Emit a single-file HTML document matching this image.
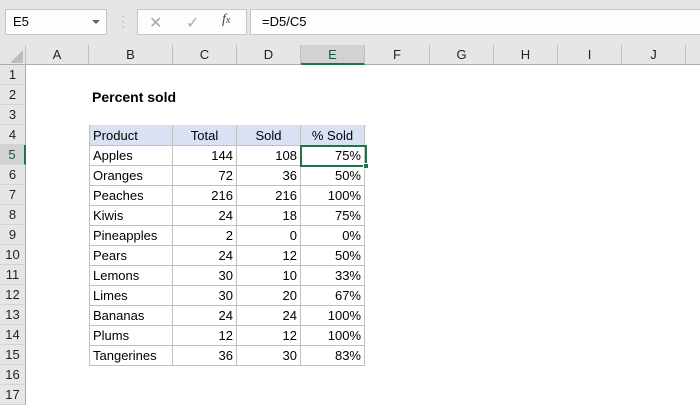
<!DOCTYPE html>
<html><head><style>
*{margin:0;padding:0;box-sizing:border-box}
body{width:700px;height:400px;overflow:hidden;background:#fff;font-family:"Liberation Sans",sans-serif;position:relative;font-size:13px;color:#000}
.a{position:absolute}
.top{left:0;top:0;width:700px;height:45px;background:#e6e6e6}
.box{background:#fdfdfd;border:1px solid #c6c6c6}
.ch{top:45px;height:20px;background:#e6e6e6;border-bottom:1px solid #ababab;border-right:1px solid #c0c0c0;text-align:center;line-height:19px;font-size:13px;color:#222}
.rh{left:0;width:26px;height:20px;background:#e6e6e6;border-right:1px solid #ababab;border-bottom:1px solid #d4d4d4;text-align:center;line-height:20px;font-size:13px;color:#222}
.c{position:absolute;height:20px;border-right:1px solid #c0c0c0;border-bottom:1px solid #c0c0c0;line-height:20px;padding:0 3px;white-space:nowrap}
.r{text-align:right}
</style></head><body>
<div class="a top"></div>
<div class="a box" style="left:5px;top:9px;width:102px;height:26px;line-height:24px;padding-left:7px;font-size:13px">E5</div>
<div class="a" style="left:92px;top:20px;width:0;height:0;border-left:4px solid transparent;border-right:4px solid transparent;border-top:4px solid #666"></div>
<div class="a" style="left:121px;top:14px;color:#aaa;font-size:12px;line-height:5px">·<br>·<br>·</div>
<div class="a box" style="left:137px;top:9px;width:110px;height:26px"></div>
<div class="a" style="left:149px;top:13px;color:#aaa;font-size:16px">✕</div>
<div class="a" style="left:186px;top:13px;color:#aaa;font-size:16px">✓</div>
<div class="a" style="left:222px;top:12px;color:#444;font-size:14px;font-style:italic;font-family:'Liberation Serif',serif">f<span style="font-size:10px">x</span></div>
<div class="a box" style="left:250px;top:9px;width:452px;height:26px;line-height:24px;padding-left:11px">=D5/C5</div>

<div class="a ch" style="left:0;width:26px;border-right:1px solid #c0c0c0"></div>
<div class="a" style="left:10px;top:50px;width:0;height:0;border-left:13px solid transparent;border-bottom:13px solid #bdbdbd"></div>
<div class="a ch" style="left:26px;width:63px">A</div>
<div class="a ch" style="left:89px;width:84px">B</div>
<div class="a ch" style="left:173px;width:64px">C</div>
<div class="a ch" style="left:237px;width:64px">D</div>
<div class="a ch" style="left:301px;width:64px;background:#d2d2d2;border-bottom:2px solid #217346;color:#185c37">E</div>
<div class="a ch" style="left:365px;width:65px">F</div>
<div class="a ch" style="left:430px;width:64px">G</div>
<div class="a ch" style="left:494px;width:64px">H</div>
<div class="a ch" style="left:558px;width:64px">I</div>
<div class="a ch" style="left:622px;width:64px">J</div>
<div class="a ch" style="left:686px;width:20px"></div>

<div class="a rh" style="top:65px">1</div>
<div class="a rh" style="top:85px">2</div>
<div class="a rh" style="top:105px">3</div>
<div class="a rh" style="top:125px">4</div>
<div class="a rh" style="top:145px;background:#d2d2d2;border-right:2px solid #217346;color:#185c37">5</div>
<div class="a rh" style="top:165px">6</div>
<div class="a rh" style="top:185px">7</div>
<div class="a rh" style="top:205px">8</div>
<div class="a rh" style="top:225px">9</div>
<div class="a rh" style="top:245px">10</div>
<div class="a rh" style="top:265px">11</div>
<div class="a rh" style="top:285px">12</div>
<div class="a rh" style="top:305px">13</div>
<div class="a rh" style="top:325px">14</div>
<div class="a rh" style="top:345px">15</div>
<div class="a rh" style="top:365px">16</div>
<div class="a rh" style="top:385px">17</div>

<div class="a" style="left:92px;top:87px;font-weight:bold;font-size:14px;line-height:20px">Percent sold</div>

<div class="a" style="left:89px;top:125px;width:277px;height:241px;border-left:1px solid #c0c0c0;border-top:1px solid #c0c0c0"></div>
<div id="t"></div>
<script>
var d=[["Apples",144,108,"75%"],["Oranges",72,36,"50%"],["Peaches",216,216,"100%"],["Kiwis",24,18,"75%"],["Pineapples",2,0,"0%"],["Pears",24,12,"50%"],["Lemons",30,10,"33%"],["Limes",30,20,"67%"],["Bananas",24,24,"100%"],["Plums",12,12,"100%"],["Tangerines",36,30,"83%"]];
var xs=[89,173,237,301,365],h="";
var hd=["Product","Total","Sold","% Sold"];
for(var j=0;j<4;j++)h+='<div class="c" style="background:#d9e1f2;top:125px;height:21px;line-height:21px;left:'+(xs[j]+(j?0:1))+'px;width:'+(xs[j+1]-xs[j]-(j?0:1))+'px;text-align:'+(j?'center':'left')+'">'+hd[j]+'</div>';
for(var i=0;i<d.length;i++)for(var j=0;j<4;j++)h+='<div class="c'+(j?' r':'')+'" style="top:'+(146+20*i)+'px;left:'+(xs[j]+(j?0:1))+'px;width:'+(xs[j+1]-xs[j]-(j?0:1))+'px">'+d[i][j]+'</div>';
document.getElementById("t").innerHTML=h;
</script>
<div class="a" style="left:300px;top:145px;width:67px;height:22px;border:2px solid #217346"></div>
<div class="a" style="left:363px;top:163px;width:6px;height:6px;background:#217346;border:1px solid #fff"></div>
</body></html>
